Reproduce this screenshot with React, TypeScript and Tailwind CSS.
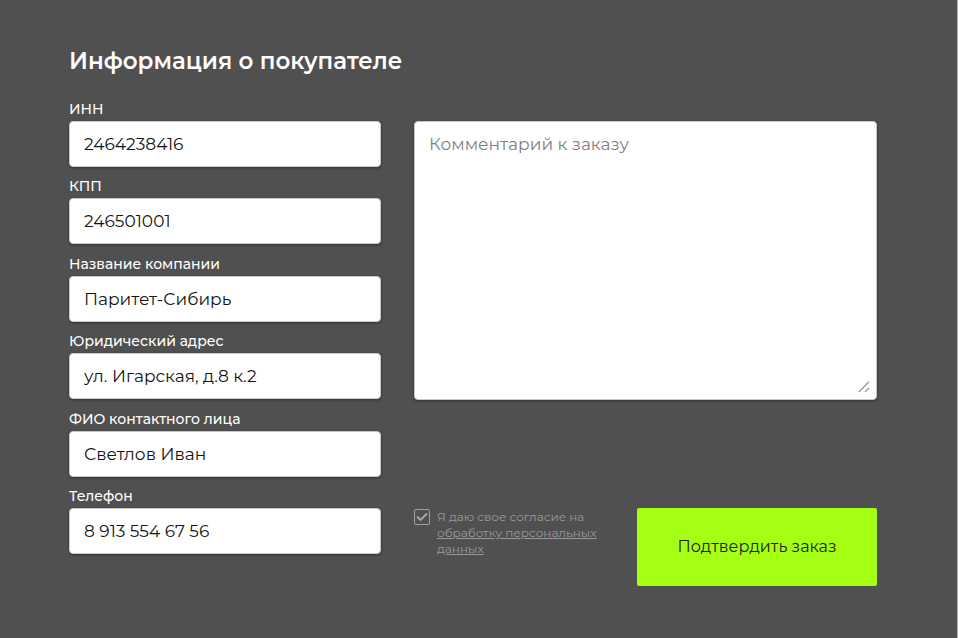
import React from "react";

const fields = [
  { id: "inn", label: "ИНН", value: "2464238416" },
  { id: "kpp", label: "КПП", value: "246501001" },
  { id: "company", label: "Название компании", value: "Паритет-Сибирь" },
  { id: "address", label: "Юридический адрес", value: "ул. Игарская, д.8 к.2" },
  { id: "contact", label: "ФИО контактного лица", value: "Светлов Иван" },
  { id: "phone", label: "Телефон", value: "8 913 554 67 56" },
];

export default function App() {
  return (
    <main className="min-h-screen border-r border-b border-r-[#b4b4b4] border-b-[#484848] bg-[#505050] pt-11 pr-20 pb-[52px] pl-[69px] font-['Montserrat','Inter',sans-serif] text-white">
      <h1 className="text-[23px] leading-[34px] font-semibold">Информация о покупателе</h1>
      <form
        className="mt-[22px] grid grid-cols-[312fr_463fr] gap-x-[33px]"
        onSubmit={(e) => e.preventDefault()}
      >
        <div className="flex flex-col justify-between pb-8">
          {fields.map((f) => (
            <div key={f.id} className="flex flex-col gap-[3px]">
              <label htmlFor={f.id} className="text-sm leading-[18px] font-medium text-white">
                {f.label}
              </label>
              <input
                id={f.id}
                defaultValue={f.value}
                className="h-[46px] w-full rounded-sm border border-[#c8c8c8] bg-white px-3.5 text-[17px] text-[#141414] shadow-[0_1px_3px_rgba(0,0,0,0.4)] outline-none"
              />
            </div>
          ))}
        </div>
        <div className="flex flex-col pt-[21px]">
          <div className="relative">
            <textarea
              aria-label="Комментарий к заказу"
              placeholder="Комментарий к заказу"
              className="block h-[279px] w-full resize-none rounded-sm border border-[#c8c8c8] bg-white px-3.5 py-2.5 text-[17px] leading-6 text-[#141414] shadow-[0_1px_3px_rgba(0,0,0,0.4)] outline-none placeholder:text-[#808080]"
            />
            <svg
              aria-hidden="true"
              className="pointer-events-none absolute right-[7px] bottom-[7px] h-3 w-3"
              viewBox="0 0 12 12"
              fill="none"
              stroke="#999999"
              strokeWidth="1.3"
            >
              <path d="M.8 11 11 .8M7 11l4-4" />
            </svg>
          </div>
          <div className="mt-[108px] flex items-start justify-between">
            <label className="flex gap-[7px] text-xs leading-4 text-[#999999]">
              <span className="relative mt-px h-4 w-4 shrink-0">
                <input
                  type="checkbox"
                  defaultChecked
                  className="peer block h-4 w-4 appearance-none rounded-xs border border-[#a0a0a0]"
                />
                <svg
                  aria-hidden="true"
                  className="pointer-events-none absolute inset-0 hidden h-4 w-4 peer-checked:block"
                  viewBox="0 0 16 16"
                  fill="none"
                  stroke="#aaaaaa"
                  strokeWidth="1.8"
                >
                  <path d="m3 7.500 3.500 3.500L13 4.500" />
                </svg>
              </span>
              <span className="w-[164px] pt-px">
                Я даю свое согласие на{" "}
                <a href="#personal-data" className="underline">
                  обработку персональных данных
                </a>
              </span>
            </label>
            <button
              type="submit"
              className="h-[78px] w-60 rounded-xs bg-[#a5ff14] text-base text-[#1c2410]"
            >
              Подтвердить заказ
            </button>
          </div>
        </div>
      </form>
    </main>
  );
}
